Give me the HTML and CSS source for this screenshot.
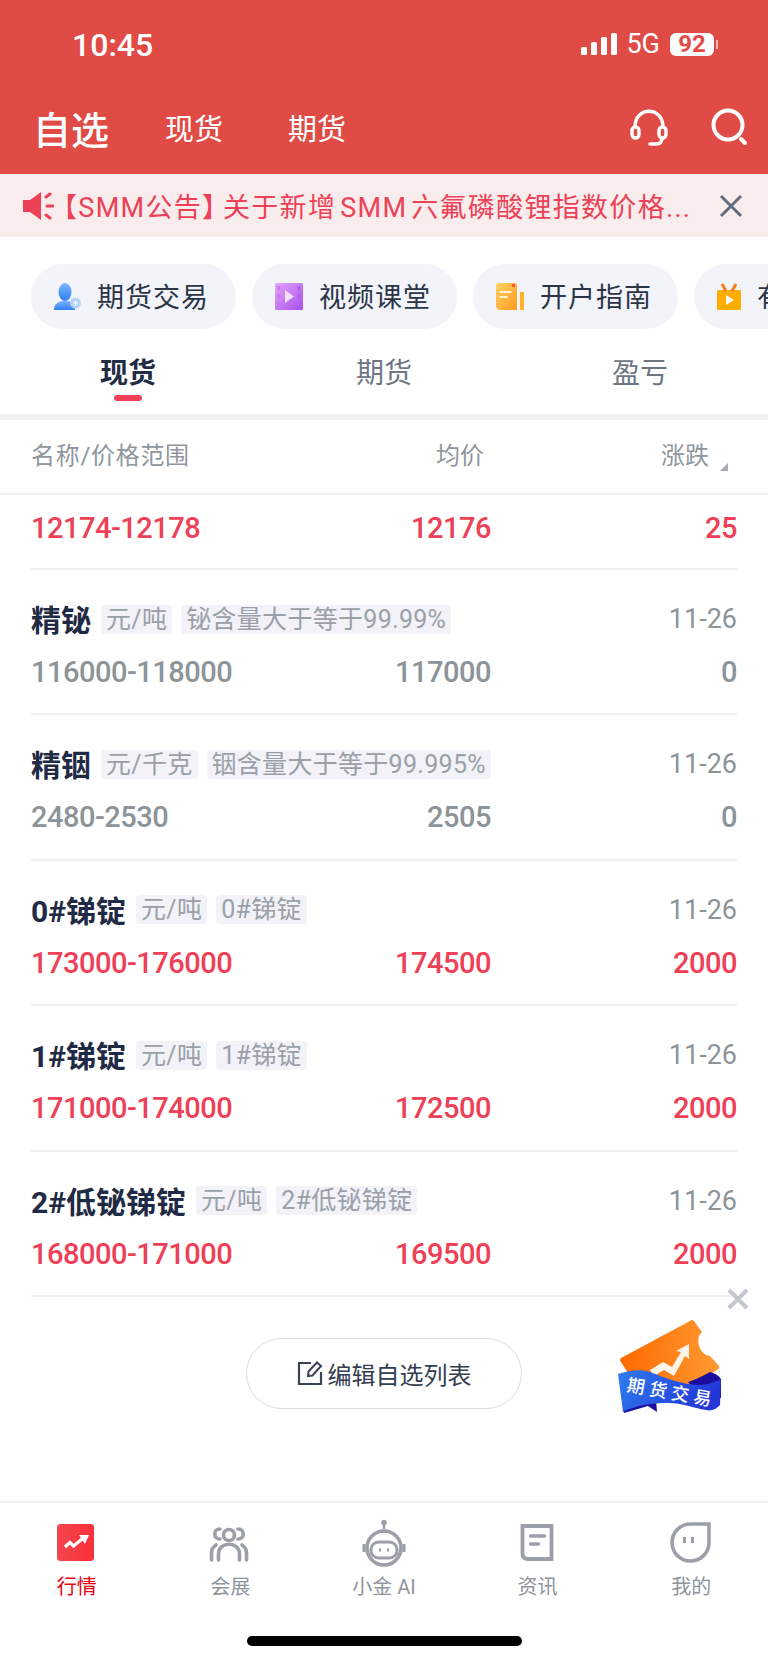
FILE: index.html
```html
<!DOCTYPE html>
<html lang="zh-CN">
<head>
    <meta charset="UTF-8">
    <meta name="viewport" content="width=device-width, initial-scale=1.0">
    <title>自选</title>
    <link rel="stylesheet" href="styles.css">
</head>
<body>
    <div class="app">
        <header class="top">
            <div class="status">
                <span class="clock">10:45</span>
                <div class="status-right">
                    <svg class="signal" width="36" height="24" viewBox="0 0 36 24">
                        <rect x="0" y="15" width="6" height="8" rx="1.5" fill="#fff"/>
                        <rect x="10" y="10" width="6" height="13" rx="1.5" fill="#fff"/>
                        <rect x="20" y="5" width="6" height="18" rx="1.5" fill="#fff"/>
                        <rect x="30" y="1" width="6" height="22" rx="1.5" fill="#fff"/>
                    </svg>
                    <span class="net">5G</span>
                    <span class="battery">92</span>
                </div>
            </div>
            <div class="title-bar">
                <span class="title">自选</span>
                <span class="title-link">现货</span>
                <span class="title-link">期货</span>
                <svg class="headset" width="38" height="38" viewBox="0 0 38 38" fill="none" stroke="#fff" stroke-width="3.4" stroke-linecap="round">
                    <path d="M5 19 C5 -2 33 -2 33 19"/>
                    <rect x="2" y="19" width="7" height="11" rx="3.5"/>
                    <rect x="29" y="19" width="7" height="11" rx="3.5"/>
                    <path d="M32 30 C32 35 29 36 26 36 H20"/>
                </svg>
                <svg class="search" width="38" height="38" viewBox="0 0 38 38" fill="none" stroke="#fff" stroke-width="4" stroke-linecap="round">
                    <circle cx="18" cy="17" r="14.5"/>
                    <path d="M31 31 L35 35"/>
                </svg>
            </div>
        </header>

        <div class="notice">
            <svg class="notice-horn" width="32" height="30" viewBox="0 0 32 30">
                <path d="M1 9 H8 L19 1 V29 L8 21 H1 Z" fill="#ee4056"/>
                <path d="M24 6 L28 3 M25 15 H31 M24 24 L28 27" stroke="#ee4056" stroke-width="3" stroke-linecap="round"/>
            </svg>
            <span class="notice-text">【SMM公告<span class="close-mark">】</span>关于新增<span class="notice-word">SMM</span>六氟磷酸锂指数价格...</span>
            <svg class="notice-close" width="24" height="24" viewBox="0 0 24 24" stroke="#5f6d7e" stroke-width="3">
                <path d="M2 2 L22 22 M22 2 L2 22"/>
            </svg>
        </div>

        <div class="pills">
            <div class="pill">
                <svg width="27" height="27" viewBox="0 0 27 27">
                    <defs>
                        <linearGradient id="blue" x1="0" y1="0" x2="0" y2="1">
                            <stop offset="0" stop-color="#7db4ff"/>
                            <stop offset="1" stop-color="#2f80f5"/>
                        </linearGradient>
                    </defs>
                    <ellipse cx="11" cy="9" rx="6.5" ry="9" fill="url(#blue)"/>
                    <path d="M0 27 C0 21 4 19 8 18 H14 C18 19 21 21 21 27 Z" fill="url(#blue)"/>
                    <circle cx="21.5" cy="20" r="5.5" fill="#b6d4fb"/>
                    <path d="M19 20 H24 M21.5 17.5 V22.5" stroke="#fff" stroke-width="1.2"/>
                </svg>
                <span>期货交易</span>
            </div>
            <div class="pill">
                <svg width="28" height="27" viewBox="0 0 28 27">
                    <defs>
                        <linearGradient id="violet" x1="0" y1="0" x2="1" y2="1">
                            <stop offset="0" stop-color="#e3a6f8"/>
                            <stop offset="1" stop-color="#a94ef0"/>
                        </linearGradient>
                    </defs>
                    <rect width="28" height="27" rx="1.5" fill="url(#violet)"/>
                    <rect x="2" y="3" width="3.5" height="4" rx="1.5" fill="#c27aee"/>
                    <rect x="2" y="11" width="3.5" height="4" rx="1.5" fill="#c27aee"/>
                    <rect x="2" y="19" width="3.5" height="4" rx="1.5" fill="#c27aee"/>
                    <rect x="22.5" y="3" width="3.5" height="4" rx="1.5" fill="#b560ea"/>
                    <rect x="22.5" y="11" width="3.5" height="4" rx="1.5" fill="#b560ea"/>
                    <rect x="22.5" y="19" width="3.5" height="4" rx="1.5" fill="#b560ea"/>
                    <path d="M10 7 L19 13.5 L10 20 Z" fill="#f3ddfd"/>
                </svg>
                <span>视频课堂</span>
            </div>
            <div class="pill">
                <svg width="28" height="27" viewBox="0 0 28 27">
                    <defs>
                        <linearGradient id="amber" x1="0" y1="0" x2="1" y2="1">
                            <stop offset="0" stop-color="#ffd266"/>
                            <stop offset="1" stop-color="#ff9a1f"/>
                        </linearGradient>
                    </defs>
                    <rect x="24" y="9" width="4" height="18" fill="#ffb02e"/>
                    <path d="M0 3 Q0 0 3 0 H19 Q21 0 21 2 V27 H5 Q0 27 0 22 Z" fill="url(#amber)"/>
                    <circle cx="17.5" cy="2.5" r="1.8" fill="#f4592a"/>
                    <rect x="3.5" y="8" width="12" height="2" fill="#fff2cf"/>
                    <rect x="3.5" y="13" width="8" height="2" fill="#fff2cf"/>
                </svg>
                <span>开户指南</span>
            </div>
            <div class="pill">
                <svg width="24" height="27" viewBox="0 0 24 27">
                    <rect x="0" y="7" width="24" height="20" rx="1.5" fill="#ffae00"/>
                    <path d="M5 1 L9 8 M19 1 L15 8" stroke="#f47f16" stroke-width="3"/>
                    <path d="M9 12 L17 17 L9 22 Z" fill="#fff"/>
                </svg>
                <span>有色学院</span>
            </div>
        </div>

        <nav class="tabs">
            <span class="tab tab-on">现货</span>
            <span class="tab">期货</span>
            <span class="tab">盈亏</span>
        </nav>

        <div class="columns">
            <span class="col-name">名称/价格范围</span>
            <span class="col-avg">均价</span>
            <span class="col-change">涨跌<i class="sort-mark"></i></span>
        </div>

        <div class="list" id="list"></div>

        <button class="edit-btn">
            <svg width="26" height="26" viewBox="0 0 26 26" fill="none" stroke="#3a4456" stroke-width="2.2">
                <path d="M14 3 H2 V24 H24 V12"/>
                <path d="M11 16 L11.5 11.5 L20 2.5 L24 6 L15.5 15.5 Z" stroke-width="2"/>
            </svg>
            编辑自选列表
        </button>

        <!-- 浮动入口 -->
        <svg class="float-close" width="22" height="22" viewBox="0 0 22 22" stroke="#c3c8d0" stroke-width="4">
            <path d="M2 2 L20 20 M20 2 L2 20"/>
        </svg>
        <svg class="float-ticket" width="104" height="94" viewBox="0 0 104 94">
            <defs>
                <linearGradient id="ticket" x1="0" y1="0" x2="1" y2="0">
                    <stop offset="0" stop-color="#fe6a00"/>
                    <stop offset="1" stop-color="#ff9a32"/>
                </linearGradient>
                <linearGradient id="ribbon" x1="0" y1="0" x2="1" y2="0.3">
                    <stop offset="0" stop-color="#2f7df0"/>
                    <stop offset="1" stop-color="#2337d8"/>
                </linearGradient>
            </defs>
            <path d="M72 1 Q74 -1 76 1 L84 12 C76 18 82 36 92 36 L101 46 Q102 49 99 50 L60 75 L18 66 L3 42 Q1 40 3 38 Z" fill="url(#ticket)"/>
            <path d="M32 50 L45 42 L54 47 L63 32 L58 31 L71 24 L71 39 L67 36 L56 56 L46 50 L36 56 Z" fill="#fff4e8"/>
            <path d="M70 62 C82 58 90 53 92 52 Q100 54 103 59 L103 78 L86 80 Z" fill="#1a0fa0"/>
            <path d="M5 90 L38 80 L39 92 L30 86 L6 93 Z" fill="#1a0fa0"/>
            <path d="M0 54 C12 50 24 49 32 52 C48 58 62 64 80 65 C90 65 97 62 103 59 L102 85 Q96 92 88 90 C75 88 65 83 50 83 C34 83 18 85 5 92 Z" fill="url(#ribbon)"/>
            <text class="ticket-label" x="8" y="71" transform="rotate(10 8 71)">期货交易</text>
        </svg>

        <footer class="dock">
            <div class="dock-item dock-on">
                <svg width="48" height="48" viewBox="0 0 48 48">
                    <defs>
                        <linearGradient id="market" x1="0" y1="0" x2="1" y2="0">
                            <stop offset="0" stop-color="#f4464f"/>
                            <stop offset="1" stop-color="#fb2f39"/>
                        </linearGradient>
                    </defs>
                    <rect x="4" y="5" width="37" height="37" rx="3.5" fill="url(#market)"/>
                    <path d="M12 28 L17 23.5 L20.5 27 L29 20" fill="none" stroke="#fff" stroke-width="3.2"/>
                    <path d="M26 16 H36 L32 25 Z" fill="#fff"/>
                </svg>
                <span>行情</span>
            </div>
            <div class="dock-item">
                <svg width="48" height="48" viewBox="0 0 48 48" fill="none" stroke="#9a9fa9" stroke-width="3.6" stroke-linecap="round">
                    <circle cx="23" cy="16" r="5.5"/>
                    <path d="M14 10 C7 10 7 20 14 20 M32 10 C39 10 39 20 32 20"/>
                    <path d="M12.5 41 V35 C12.5 22 33.5 22 33.5 35 V41"/>
                    <path d="M5.5 41 V34 C5.5 30 7 28 10 26 M40.5 41 V34 C40.5 30 39 28 36 26"/>
                </svg>
                <span>会展</span>
            </div>
            <div class="dock-item">
                <svg width="48" height="48" viewBox="0 0 48 48" fill="none" stroke="#9a9fa9" stroke-width="3.6">
                    <path d="M24 10 V5" stroke-width="2.4"/>
                    <circle cx="24" cy="3.5" r="2.8" fill="#9a9fa9" stroke="none"/>
                    <circle cx="24" cy="29" r="17"/>
                    <path d="M4 25 V33 M44 25 V33" stroke-width="3"/>
                    <rect x="11" y="23" width="26" height="16" rx="7.5" stroke-width="3"/>
                    <path d="M20 29.5 V32.5 M28 29.5 V32.5" stroke-width="2.2"/>
                </svg>
                <span>小金 AI</span>
            </div>
            <div class="dock-item">
                <svg width="48" height="48" viewBox="0 0 48 48" fill="none" stroke="#9a9fa9" stroke-width="3.8">
                    <path d="M8.5 7 H37.5 V40 H14 Q8.5 40 8.5 34.5 Z"/>
                    <path d="M16.5 17 H30.5 M16.5 25 H24.5" stroke-width="3.4" stroke-linecap="round"/>
                </svg>
                <span>资讯</span>
            </div>
            <div class="dock-item">
                <svg width="48" height="48" viewBox="0 0 48 48" fill="none" stroke="#9a9fa9" stroke-width="3.6">
                    <path d="M42 5 V24 A18.5 18.5 0 1 1 23.5 5 Z"/>
                    <path d="M17.5 18 V24 M25.5 18 V24" stroke-width="3"/>
                </svg>
                <span>我的</span>
            </div>
        </footer>
        <div class="home-bar"></div>
    </div>

    <script>
        // 自选列表数据
        const rows = [
            { name: '精铋', unit: '元/吨', note: '铋含量大于等于99.99%', date: '11-26', range: '116000-118000', avg: '117000', change: '0' },
            { name: '精铟', unit: '元/千克', note: '铟含量大于等于99.995%', date: '11-26', range: '2480-2530', avg: '2505', change: '0' },
            { name: '0#锑锭', unit: '元/吨', note: '0#锑锭', date: '11-26', range: '173000-176000', avg: '174500', change: '2000' },
            { name: '1#锑锭', unit: '元/吨', note: '1#锑锭', date: '11-26', range: '171000-174000', avg: '172500', change: '2000' },
            { name: '2#低铋锑锭', unit: '元/吨', note: '2#低铋锑锭', date: '11-26', range: '168000-171000', avg: '169500', change: '2000' },
        ];

        function valuesHtml(row) {
            const tone = row.change === '0' ? 'flat' : 'up';
            return `
                <div class="row-values ${tone}">
                    <span>${row.range}</span>
                    <span>${row.avg}</span>
                    <span class="row-change">${row.change}</span>
                </div>`;
        }

        const list = document.getElementById('list');
        // 第一行被表头盖住，只露出价格
        list.innerHTML = `<div class="row row-cut">${valuesHtml({ range: '12174-12178', avg: '12176', change: '25' })}</div>`;
        rows.forEach((row) => {
            list.innerHTML += `
                <div class="row">
                    <div class="row-head">
                        <span class="row-name">${row.name}</span>
                        <span class="tag">${row.unit}</span>
                        <span class="tag">${row.note}</span>
                        <span class="row-date">${row.date}</span>
                    </div>
                    ${valuesHtml(row)}
                </div>`;
        });
    </script>
</body>
</html>
```

FILE: styles.css
```css
* {
    box-sizing: border-box;
}
body {
    margin: 0;
    background-color: #fff;
    font-family: Roboto, "Noto Sans CJK SC", sans-serif;
}
.app {
    position: relative;
    width: 768px;
    height: 1663px;
    overflow: hidden;
    display: flex;
    flex-direction: column;
}
.top {
    height: 174px;
    background-color: #e04b46;
    color: #fff;
}
.status {
    height: 88px;
    padding: 27px 54px 0 72px;
    display: flex;
    justify-content: space-between;
    align-items: flex-start;
}
.clock {
    font-size: 32px;
    font-weight: 500;
    line-height: 36px;
}
.status-right {
    display: flex;
    align-items: center;
    height: 36px;
    margin-top: -1px;
}
.signal {
    margin-right: 9px;
}
.net {
    font-size: 27px;
    margin-right: 10px;
}
.battery {
    position: relative;
    width: 44px;
    height: 23px;
    border-radius: 6px;
    background-color: #fff;
    color: #e04b46;
    font-size: 24px;
    font-weight: 700;
    line-height: 23px;
    text-align: center;
}
.battery::after {
    content: "";
    position: absolute;
    right: -4px;
    top: 7px;
    width: 2px;
    height: 9px;
    background-color: #f3b4b1;
}
.title-bar {
    height: 86px;
    padding: 0 20px 8px 33px;
    display: flex;
    align-items: center;
}
.title {
    font-size: 38px;
    font-weight: 500;
    margin-right: 56px;
}
.title-link {
    font-size: 29px;
    margin-right: 65px;
}
.title-link + .title-link {
    margin-right: 0;
}
.headset {
    margin-left: auto;
    margin-right: 42px;
}
.notice {
    height: 63px;
    padding: 0 25px 0 22px;
    background-color: #f9ecec;
    display: flex;
    align-items: center;
}
.notice-horn {
    flex: none;
}
.notice-text {
    flex: 1;
    margin-left: -4px;
    font-size: 27px;
    letter-spacing: 1.3px;
    color: #ee4056;
    white-space: nowrap;
}
.close-mark {
    letter-spacing: -6px;
}
.notice-word {
    margin: 0 4px;
}
.notice-close {
    flex: none;
}
.pills {
    padding: 27px 0 0 31px;
    display: flex;
    gap: 16px;
    height: 92px;
    overflow: hidden;
}
.pill {
    flex: none;
    width: 205px;
    height: 65px;
    padding-left: 23px;
    border-radius: 33px;
    background-color: #f2f4f9;
    display: flex;
    align-items: center;
    gap: 16px;
    font-size: 27px;
    letter-spacing: 1px;
    color: #2b3547;
}
.pill span {
    margin-top: -2px;
}
.tabs {
    display: grid;
    grid-template-columns: repeat(3, 1fr);
    border-bottom: 6px solid #f2f2f2;
    height: 91px;
}
.tab {
    position: relative;
    padding-top: 24px;
    text-align: center;
    font-size: 28px;
    line-height: 42px;
    color: #6e7683;
}
.tab-on {
    font-weight: 700;
    color: #222d44;
}
.tab-on::after {
    content: "";
    position: absolute;
    left: 114px;
    top: 66px;
    width: 28px;
    height: 6px;
    border-radius: 3px;
    background-color: #ee4056;
}
.columns {
    height: 75px;
    padding: 0 31px 6px;
    display: grid;
    grid-template-columns: 1fr auto 253px;
    align-items: center;
    border-bottom: 2px solid #f0f0f0;
    font-size: 24px;
    color: #8f969c;
}
.col-name {
    letter-spacing: 0.7px;
}
.col-change {
    position: relative;
    padding-right: 28px;
    text-align: right;
}
.sort-mark {
    position: absolute;
    right: 9px;
    bottom: 0;
    border-style: solid;
    border-width: 0 0 8px 8px;
    border-color: transparent transparent #a5abb3 transparent;
}
.row {
    height: 145.4px;
    margin: 0 31px;
    padding-top: 27px;
    border-bottom: 2px solid #f0f0f0;
}
.row-cut {
    height: 75px;
    padding-top: 11px;
}
.row-head {
    height: 44px;
    display: flex;
    align-items: center;
}
.row-name {
    margin-top: -2px;
    margin-right: 10px;
    font-size: 30px;
    font-weight: 700;
    color: #1f2a44;
}
.tag {
    height: 29px;
    margin-right: 9px;
    padding: 0 5px;
    border-radius: 4px;
    background-color: #f2f2f8;
    font-size: 25px;
    letter-spacing: 0.3px;
    line-height: 29px;
    color: #9aa0a8;
}
.row-date {
    margin-left: auto;
    font-size: 27px;
    color: #8c9499;
}
.row-values {
    height: 44px;
    margin-top: 9px;
    display: grid;
    grid-template-columns: 1fr auto 246px;
    align-items: center;
    font-size: 29px;
    font-weight: 500;
    letter-spacing: -0.5px;
}
.row-cut .row-values {
    margin-top: 0;
}
.row-change {
    text-align: right;
}
.up {
    color: #ee4056;
}
.flat {
    color: #8c9499;
}
.edit-btn {
    align-self: center;
    width: 276px;
    height: 71px;
    margin-top: 41px;
    border: 1px solid #dcdcdc;
    border-radius: 36px;
    background-color: #fff;
    display: flex;
    align-items: center;
    justify-content: center;
    gap: 5px;
    font-family: inherit;
    font-size: 24px;
    color: #333d4f;
}
.float-close {
    position: absolute;
    left: 727px;
    top: 1288px;
}
.float-ticket {
    position: absolute;
    left: 618px;
    top: 1320px;
}
.ticket-label {
    font-size: 18px;
    font-weight: 500;
    letter-spacing: 4.5px;
    fill: #fff;
}
.dock {
    position: absolute;
    left: 0;
    right: 0;
    top: 1501px;
    height: 162px;
    padding-top: 16px;
    border-top: 2px solid #f0f0f0;
    display: grid;
    grid-template-columns: repeat(5, 1fr);
}
.dock-item {
    display: flex;
    flex-direction: column;
    align-items: center;
    gap: 6px;
    font-size: 20px;
    line-height: 28px;
    color: #8e949c;
}
.dock-on {
    color: #e60012;
}
.home-bar {
    position: absolute;
    left: 247px;
    top: 1636px;
    width: 275px;
    height: 10px;
    border-radius: 5px;
    background-color: #000;
}
```
